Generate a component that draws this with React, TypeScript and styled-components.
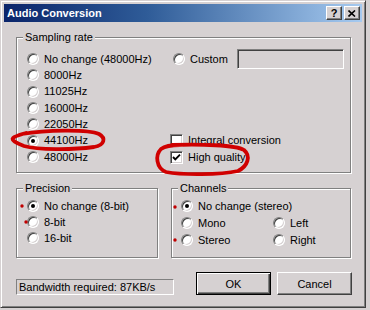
import React from 'react';
import styled, { createGlobalStyle } from 'styled-components';

const FACE = '#d6d1d2';

const GlobalStyle = createGlobalStyle`
  html, body {
    margin: 0;
    padding: 0;
    background: ${FACE};
  }
  body {
    font-family: "Liberation Sans", Arial, sans-serif;
    font-size: 11px;
    color: #000;
  }
`;

const Window = styled.div`
  position: relative;
  box-sizing: border-box;
  width: 366px;
  height: 308px;
  padding: 3px;
  display: flex;
  flex-direction: column;
  background: ${FACE};
  border: 1px solid;
  border-color: ${FACE} #404040 #404040 ${FACE};
  box-shadow: inset 1px 1px 0 #fff, inset -1px -1px 0 #808080;
`;

const TitleBar = styled.div`
  height: 18px;
  display: flex;
  align-items: center;
  padding: 0 2px 0 3px;
  background: linear-gradient(90deg, #0a246a 0%, #2f5c98 40%, #a6caf0 100%);
`;

const TitleText = styled.span`
  flex: 1;
  color: #fff;
  font-weight: bold;
  font-size: 11px;
`;

const CaptionButton = styled.button<{ $gap?: boolean }>`
  box-sizing: border-box;
  width: 16px;
  height: 14px;
  padding: 0;
  margin-left: ${p => (p.$gap ? '2px' : '0')};
  display: flex;
  align-items: center;
  justify-content: center;
  font-family: "Liberation Sans", Arial, sans-serif;
  font-weight: bold;
  font-size: 11px;
  line-height: 1;
  color: #000;
  background: ${FACE};
  border: 1px solid;
  border-color: #fff #404040 #404040 #fff;
  box-shadow: inset -1px -1px 0 #808080;
`;

const Content = styled.div`
  display: flex;
  flex-direction: column;
  padding: 15px 11px 0 12px;
`;

const Group = styled.div<{ $w?: number; $h: number }>`
  position: relative;
  box-sizing: border-box;
  width: ${p => (p.$w ? `${p.$w}px` : 'auto')};
  height: ${p => p.$h}px;
  border: 1px solid #808080;
  box-shadow: inset 1px 1px 0 #fff, 1px 1px 0 #fff;
`;

const Legend = styled.span`
  position: absolute;
  top: -7px;
  left: 6px;
  padding: 0 2px;
  line-height: 13px;
  background: ${FACE};
`;

const SamplingGrid = styled.div`
  display: grid;
  grid-template-columns: 143px 1fr;
  grid-auto-rows: 16.33px;
  padding: 13px 6px 0 10px;
`;

const Cell = styled.div<{ $row: number; $col: number; $shift?: number }>`
  grid-row: ${p => p.$row};
  grid-column: ${p => p.$col};
  display: flex;
  align-items: center;
  margin-left: ${p => p.$shift ?? 0}px;
`;

const Option = styled.label`
  display: flex;
  align-items: center;
  gap: 5px;
  white-space: nowrap;
  line-height: 13px;
`;

const RadioCircle = styled.span<{ $on?: boolean }>`
  position: relative;
  box-sizing: border-box;
  width: 12px;
  height: 12px;
  flex: none;
  border-radius: 50%;
  background: #fff;
  border: 1px solid;
  border-color: #808080 #fff #fff #808080;
  box-shadow: inset 1px 1px 0 #404040, inset -1px -1px 0 ${FACE};

  &::after {
    content: '';
    display: ${p => (p.$on ? 'block' : 'none')};
    position: absolute;
    left: 3px;
    top: 3px;
    width: 4px;
    height: 4px;
    border-radius: 50%;
    background: #000;
  }
`;

const CheckBox = styled.span`
  box-sizing: border-box;
  width: 13px;
  height: 13px;
  flex: none;
  display: flex;
  align-items: center;
  justify-content: center;
  background: #fff;
  border: 1px solid;
  border-color: #808080 #fff #fff #808080;
  box-shadow: inset 1px 1px 0 #404040, inset -1px -1px 0 ${FACE};
`;

const TextField = styled.div`
  box-sizing: border-box;
  width: 107px;
  height: 20px;
  margin-left: auto;
  background: ${FACE};
  border: 1px solid;
  border-color: #808080 #fff #fff #808080;
  box-shadow: inset 1px 1px 0 #404040, inset -1px -1px 0 ${FACE};
`;

const GroupRow = styled.div`
  display: flex;
  gap: 13px;
  margin-top: 15px;
`;

const SmallGrid = styled.div<{ $cols: string; $rows: string; $left: number }>`
  display: grid;
  grid-template-columns: ${p => p.$cols};
  grid-template-rows: ${p => p.$rows};
  padding: 9px 0 0 ${p => p.$left}px;
`;

const BottomRow = styled.div`
  display: flex;
  align-items: flex-start;
  justify-content: space-between;
  margin-top: 14px;
`;

const StatusBox = styled.div`
  box-sizing: border-box;
  width: 158px;
  height: 16px;
  margin-top: 7px;
  padding-left: 2px;
  line-height: 14px;
  white-space: nowrap;
  border: 1px solid;
  border-color: #808080 #fff #fff #808080;
`;

const Buttons = styled.div`
  display: flex;
  gap: 6px;
  margin-right: -1px;
`;

const PushButton = styled.button<{ $default?: boolean }>`
  box-sizing: border-box;
  width: 75px;
  height: 23px;
  padding: 0;
  font-family: "Liberation Sans", Arial, sans-serif;
  font-size: 11px;
  color: #000;
  background: ${FACE};
  border: 1px solid;
  border-color: ${p => (p.$default ? '#000' : '#fff #404040 #404040 #fff')};
  box-shadow: ${p =>
    p.$default
      ? 'inset 1px 1px 0 #fff, inset -1px -1px 0 #404040, inset -2px -2px 0 #808080'
      : 'inset -1px -1px 0 #808080'};
`;

const Annotations = styled.svg`
  position: absolute;
  left: -1px;
  top: -1px;
  pointer-events: none;
`;

const Radio = ({ label, on }: { label: string; on?: boolean }) => (
  <Option>
    <RadioCircle $on={on} />
    {label}
  </Option>
);

const Check = ({ label, on }: { label: string; on?: boolean }) => (
  <Option>
    <CheckBox>
      {on && (
        <svg width="9" height="9" viewBox="0 0 9 9">
          <path d="M1 4 L3.3 6.4 L8 1.6" stroke="#000" strokeWidth="1.9" fill="none" />
        </svg>
      )}
    </CheckBox>
    {label}
  </Option>
);

const rates = ['No change (48000Hz)', '8000Hz', '11025Hz', '16000Hz', '22050Hz', '44100Hz', '48000Hz'];

export default function App() {
  return (
    <>
      <GlobalStyle />
      <Window>
        <TitleBar>
          <TitleText>Audio Conversion</TitleText>
          <CaptionButton>?</CaptionButton>
          <CaptionButton $gap>
            <svg width="8" height="7" viewBox="0 0 8 7">
              <path d="M0.5 0.5 L7 6.5 M7 0.5 L0.5 6.5" stroke="#000" strokeWidth="1.6" />
            </svg>
          </CaptionButton>
        </TitleBar>

        <Content>
          <Group $h={136}>
            <Legend>Sampling rate</Legend>
            <SamplingGrid>
              {rates.map((r, i) => (
                <Cell key={r} $row={i + 1} $col={1}>
                  <Radio label={r} on={r === '44100Hz'} />
                </Cell>
              ))}
              <Cell $row={1} $col={2} $shift={3}>
                <Radio label="Custom" />
                <TextField />
              </Cell>
              <Cell $row={6} $col={2}>
                <Check label="Integral conversion" />
              </Cell>
              <Cell $row={7} $col={2}>
                <Check label="High quality" on />
              </Cell>
            </SamplingGrid>
          </Group>

          <GroupRow>
            <Group $w={142} $h={70}>
              <Legend>Precision</Legend>
              <SmallGrid $cols="1fr" $rows="16px 16px 16px" $left={10}>
                <Radio label="No change (8-bit)" on />
                <Radio label="8-bit" />
                <Radio label="16-bit" />
              </SmallGrid>
            </Group>
            <Group $w={180} $h={70}>
              <Legend>Channels</Legend>
              <SmallGrid $cols="92px 1fr" $rows="16px 18px 16px" $left={9}>
                <Cell $row={1} $col={1}>
                  <Radio label="No change (stereo)" on />
                </Cell>
                <Cell $row={2} $col={1}>
                  <Radio label="Mono" />
                </Cell>
                <Cell $row={2} $col={2}>
                  <Radio label="Left" />
                </Cell>
                <Cell $row={3} $col={1}>
                  <Radio label="Stereo" />
                </Cell>
                <Cell $row={3} $col={2}>
                  <Radio label="Right" />
                </Cell>
              </SmallGrid>
            </Group>
          </GroupRow>

          <BottomRow>
            <StatusBox>Bandwidth required: 87KB/s</StatusBox>
            <Buttons>
              <PushButton $default>OK</PushButton>
              <PushButton>Cancel</PushButton>
            </Buttons>
          </BottomRow>
        </Content>

        <Annotations width="366" height="308" viewBox="0 0 366 308">
          <g stroke="#d00000" strokeWidth="3.8" fill="none" strokeLinecap="round" strokeLinejoin="round">
            <path d="M22 134 C45 130 88 129 99 134 C106 138 105 145 94 147 C72 150 38 150 24 146 C16 143 11 140 13 138 C15 136 19 135 26 133" />
            <path d="M172 145 C200 144 236 145 244 150 C251 156 248 166 238 171 C220 175 182 175 166 172 C156 168 155 155 161 149 C165 146 170 145 180 145" />
          </g>
          <g fill="#c00000">
            <circle cx="22" cy="206" r="1.7" />
            <circle cx="26" cy="222" r="1.7" />
            <circle cx="175" cy="207" r="1.7" />
            <circle cx="175" cy="240" r="1.7" />
          </g>
        </Annotations>
      </Window>
    </>
  );
}
